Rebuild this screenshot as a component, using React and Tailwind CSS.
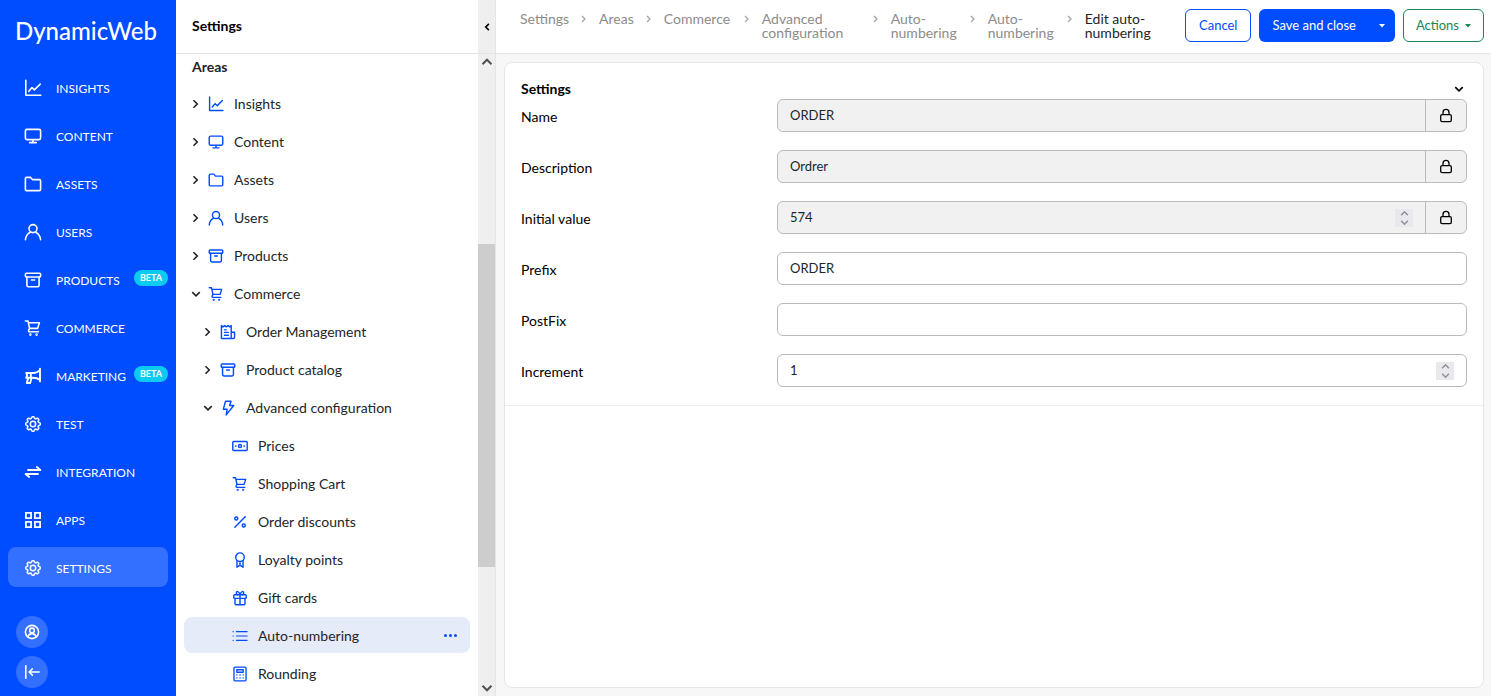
import React, { useState } from "react";
import { BsGear } from "react-icons/bs";

// All icons share the same 18x18 box and stroke
const Svg = ({ children, className = "size-4", width = 1.6 }) => (
  <svg
    viewBox="0 0 18 18"
    fill="none"
    stroke="currentColor"
    strokeWidth={width}
    strokeLinecap="round"
    strokeLinejoin="round"
    className={`shrink-0 ${className}`}
    aria-hidden="true"
  >
    {children}
  </svg>
);

const InsightsIcon = (props) => (
  <Svg {...props}>
    <path d="M1.8 1.2v15.1h15M4.8 12.3 8 8.6l2.4 2.3 5.8-5.8" />
  </Svg>
);

const ContentIcon = (props) => (
  <Svg {...props}>
    <rect x="1.4" y="2.4" width="15.2" height="10.2" rx="1.6" />
    <path d="M9 12.8v2.6M5.6 15.6h6.8" />
  </Svg>
);

const AssetsIcon = (props) => (
  <Svg {...props}>
    <path d="M1.4 3.6c0-.7.5-1.2 1.2-1.2h4l1.8 2.2h7c.7 0 1.2.5 1.2 1.2v8.6c0 .7-.5 1.2-1.2 1.2H2.6c-.7 0-1.2-.5-1.2-1.2z" />
  </Svg>
);

const UsersIcon = (props) => (
  <Svg {...props}>
    <circle cx="9" cy="5.6" r="4" />
    <path d="M1.4 16.8c.3-3.6 2.3-6.2 4.8-7.6M16.6 16.8c-.3-3.6-2.3-6.2-4.8-7.6" />
  </Svg>
);

const ProductsIcon = (props) => (
  <Svg {...props}>
    <rect x="1.4" y="2.2" width="15.2" height="3.8" rx="1" />
    <path d="M2.9 6v8.2c0 .9.6 1.5 1.5 1.5h9.2c.9 0 1.5-.6 1.5-1.5V6M7.4 9h3.2" />
  </Svg>
);

const CommerceIcon = (props) => (
  <Svg {...props}>
    <path d="M1.4 2h2.6l1.6 7.4h8l1.8-5.6H4.4M5.6 9.4l-.9 1.8c-.4.8 0 1.6.9 1.6h8.8" />
    <circle cx="6.4" cy="15.6" r=".5" />
    <circle cx="12.6" cy="15.6" r=".5" />
  </Svg>
);

const MarketingIcon = (props) => (
  <Svg {...props} width={1.9}>
    <path d="M16 1.6v12.8M16 3.2C14 5.2 11.600 6 9 6H2.200l1 2.400-1 2.400H9c2.600 0 5 .6 7 2.200M6.800 6.200v4.400M4.200 11l-1.400 5h3.400l1.200-4.800" />
  </Svg>
);

const GearIcon = ({ className }) => (
  <BsGear className={`shrink-0 p-px ${className}`} strokeWidth="0.6" />
);

const IntegrationIcon = (props) => (
  <Svg {...props} width={1.8}>
    <path d="M4 7h12.4l-3.6-3M14 11H1.6l3.6 3" />
  </Svg>
);

const AppsIcon = (props) => (
  <Svg {...props} width={1.8}>
    <path
      strokeLinejoin="miter"
      d="M1.9 1.9h5.2v5.2H1.900zM10.900 1.900h5.200v5.200h-5.200zM1.900 10.900h5.200v5.200H1.900zM10.900 10.900h5.200v5.200h-5.200z"
    />
  </Svg>
);

const OrderIcon = (props) => (
  <Svg {...props}>
    <path d="M1.6 16.4V1.8l1.8 1.4 1.9-1.4 1.9 1.4 1.9-1.4 1.9 1.4 1.6-1.4v14.6zM12.6 9.2h3.8v5.6c0 .9-.7 1.6-1.6 1.6h-2.2M5 6.6h2M5 9.4h4.4M5 12.6h4.4" />
  </Svg>
);

const BoltIcon = (props) => (
  <Svg {...props}>
    <path d="M6.2 1.4h6.2l-1.6 4.8h4.6L7 16.8l1-6.4H3.8z" />
  </Svg>
);

const PricesIcon = (props) => (
  <Svg {...props}>
    <rect x=".9" y="4" width="16.2" height="10" rx="1.2" />
    <circle cx="9" cy="9" r="1.7" />
    <path d="M4 9h.6M13.4 9h.6" />
  </Svg>
);

const DiscountIcon = (props) => (
  <Svg {...props}>
    <path d="M14.8 3 3.2 15" />
    <circle cx="4.8" cy="5" r="1.7" />
    <circle cx="13.2" cy="13" r="1.7" />
  </Svg>
);

const LoyaltyIcon = (props) => (
  <Svg {...props}>
    <circle cx="9" cy="5.8" r="4.8" />
    <path d="M5.6 9.6v7.6L9 14.8l3.4 2.4V9.6M9 12v2.6" />
  </Svg>
);

const GiftIcon = (props) => (
  <Svg {...props}>
    <rect x="2" y="5.4" width="14" height="4" rx="1" />
    <path d="M3.4 9.4v6c0 .7.5 1.2 1.2 1.2h8.8c.7 0 1.2-.5 1.2-1.2v-6M9 5.4v11.2M9 5.2C7.8 1.4 4.8.8 4.8 3.2c0 1.2.8 2 1.4 2.1M9 5.2c1.2-3.8 4.2-4.4 4.2-2 0 1.2-.8 2-1.4 2.1" />
  </Svg>
);

const NumberingIcon = (props) => (
  <Svg {...props} width={1.4}>
    <path d="M5 4.2h12M5 9h12M5 13.8h12M1.2 4.2h.2M1.2 9h.2M1.2 13.8h.2" />
  </Svg>
);

const RoundingIcon = (props) => (
  <Svg {...props} width={1.5}>
    <rect x="2.2" y="1.2" width="13.6" height="15.6" rx="1.2" />
    <path d="M5.4 4.2h7.2V7H5.4zM5.4 10h.2M9 10h.2M12.4 10h.2M5.4 13.4h.2M9 13.4h.2M12.4 13.4h.2" />
  </Svg>
);

const ProfileIcon = (props) => (
  <Svg {...props} width={1.8}>
    <circle cx="9" cy="9" r="7.4" />
    <circle cx="9" cy="7.2" r="2.6" />
    <path d="M4.6 14.6c.4-2.4 2-3.8 4.4-3.8s4 1.4 4.4 3.8" />
  </Svg>
);

const CollapseIcon = (props) => (
  <Svg {...props} width={1.8}>
    <path d="M2 2v14M17 9H6M9.4 5.4 5.8 9l3.6 3.6" />
  </Svg>
);

const LockIcon = () => (
  <svg viewBox="0 0 14 16" fill="none" stroke="currentColor" strokeWidth="1.3" className="h-4 w-3.5" aria-hidden="true">
    <rect x="1.7" y="6.6" width="10.6" height="7" rx="1.4" />
    <path d="M4 6.6V4.400a3 3 0 0 1 6 0v2.200" />
  </svg>
);

// Small arrow used in the tree, the breadcrumb and the panel headers
const Chevron = ({ dir = "right", className = "size-2.5" }) => {
  const paths = {
    right: "M2 1 5 4 2 7",
    left: "M5.5 1.5 3 4 5.500 6.500",
    down: "M1 2.5 4 5.5 7 2.5",
    up: "M1 5.5 4 2.5 7 5.5",
  };
  return (
    <svg
      viewBox="0 0 8 8"
      fill="none"
      stroke="currentColor"
      strokeWidth="1.3"
      className={`shrink-0 ${className}`}
      aria-hidden="true"
    >
      <path d={paths[dir]} />
    </svg>
  );
};

const Caret = () => (
  <svg viewBox="0 0 6 4" fill="currentColor" className="h-1 w-1.5 shrink-0" aria-hidden="true">
    <path d="M0 0h6L3 3.4z" />
  </svg>
);

const navItems = [
  { label: "INSIGHTS", icon: InsightsIcon },
  { label: "CONTENT", icon: ContentIcon },
  { label: "ASSETS", icon: AssetsIcon },
  { label: "USERS", icon: UsersIcon },
  { label: "PRODUCTS", icon: ProductsIcon, beta: true },
  { label: "COMMERCE", icon: CommerceIcon },
  { label: "MARKETING", icon: MarketingIcon, beta: true },
  { label: "TEST", icon: GearIcon },
  { label: "INTEGRATION", icon: IntegrationIcon },
  { label: "APPS", icon: AppsIcon },
  { label: "SETTINGS", icon: GearIcon, active: true },
];

const treeItems = [
  { label: "Insights", icon: InsightsIcon, level: 0, arrow: "right" },
  { label: "Content", icon: ContentIcon, level: 0, arrow: "right" },
  { label: "Assets", icon: AssetsIcon, level: 0, arrow: "right" },
  { label: "Users", icon: UsersIcon, level: 0, arrow: "right" },
  { label: "Products", icon: ProductsIcon, level: 0, arrow: "right" },
  { label: "Commerce", icon: CommerceIcon, level: 0, arrow: "down" },
  { label: "Order Management", icon: OrderIcon, level: 1, arrow: "right" },
  { label: "Product catalog", icon: ProductsIcon, level: 1, arrow: "right" },
  { label: "Advanced configuration", icon: BoltIcon, level: 1, arrow: "down" },
  { label: "Prices", icon: PricesIcon, level: 2 },
  { label: "Shopping Cart", icon: CommerceIcon, level: 2 },
  { label: "Order discounts", icon: DiscountIcon, level: 2 },
  { label: "Loyalty points", icon: LoyaltyIcon, level: 2 },
  { label: "Gift cards", icon: GiftIcon, level: 2 },
  { label: "Auto-numbering", icon: NumberingIcon, level: 2, active: true },
  { label: "Rounding", icon: RoundingIcon, level: 2 },
];

const crumbs = [
  { label: "Settings" },
  { label: "Areas" },
  { label: "Commerce", width: "w-[68px]" },
  { label: "Advanced configuration", width: "w-[99px]" },
  { label: "Auto-numbering", width: "w-[67px]" },
  { label: "Auto-numbering", width: "w-[67px]" },
  { label: "Edit auto-numbering", width: "w-[72px]", current: true },
];

const fields = [
  { id: "name", label: "Name", value: "ORDER", locked: true },
  { id: "description", label: "Description", value: "Ordrer", locked: true },
  { id: "initialValue", label: "Initial value", value: "574", locked: true, number: true },
  { id: "prefix", label: "Prefix", value: "ORDER" },
  { id: "postfix", label: "PostFix", value: "" },
  { id: "increment", label: "Increment", value: "1", number: true },
];

const levelPadding = ["pl-[7px]", "pl-[19px]", "pl-[31px]"];

// MAIN NAVIGATION
const Sidebar = () => (
  <aside className="flex w-44 shrink-0 flex-col bg-[#004cff] text-white">
    <a href="#home" className="px-[15px] pt-[13px] text-2xl leading-9 font-medium">
      DynamicWeb
    </a>
    <nav className="mt-[18px] flex flex-col gap-2 px-2">
      {navItems.map(({ label, icon: Icon, beta, active }) => (
        <a
          key={label}
          href={`#${label.toLowerCase()}`}
          className={`flex h-10 items-center rounded-lg pt-0.5 pl-4 text-xs ${active ? "bg-[#3370ff]" : ""}`}
        >
          <Icon className="size-[18px]" />
          <span className="ml-3.5 pt-px">{label}</span>
          {beta && (
            <span className="mr-0 mb-1 ml-auto rounded-full bg-[#0dcaf0] px-1.5 text-[9px] leading-4 font-bold">
              BETA
            </span>
          )}
        </a>
      ))}
    </nav>
    <div className="mt-auto flex flex-col gap-2 px-4 pb-2">
      <button aria-label="Profile" className="flex size-8 items-center justify-center rounded-full bg-[#3370ff]">
        <ProfileIcon />
      </button>
      <button aria-label="Collapse menu" className="flex size-8 items-center justify-center rounded-full bg-[#3370ff]">
        <CollapseIcon />
      </button>
    </div>
  </aside>
);

// SETTINGS TREE WITH SCROLLBAR
const TreePanel = () => (
  <section className="flex w-80 shrink-0 flex-col border-r border-[#e4e4e4] bg-white text-[#212529]">
    <header className="flex h-[54px] shrink-0 border-b border-[#e4e4e4]">
      <h2 className="flex-1 self-center px-4 pb-0.5 text-sm font-bold text-black">Settings</h2>
      <button
        aria-label="Collapse panel"
        className="flex w-[17px] items-center justify-center bg-[#efefef] text-black"
      >
        <Chevron dir="left" />
      </button>
    </header>
    <div className="flex min-h-0 flex-1">
      <div className="flex min-w-0 flex-1 flex-col gap-0.5 overflow-hidden px-2">
        <h3 className="h-[29px] shrink-0 px-2 pt-[3px] text-sm font-bold">Areas</h3>
        {treeItems.map(({ label, icon: Icon, level, arrow, active }) => (
          <div
            key={label}
            className={`flex h-9 shrink-0 items-center rounded-lg pt-px pr-3 ${levelPadding[level]} ${active ? "bg-[#e5ebf8]" : ""}`}
          >
            <span className="mr-[7px] size-2.5">{arrow && <Chevron dir={arrow} />}</span>
            <Icon className="size-4 text-[#004cff]" />
            <a href="#area" className="ml-2.5 pt-px text-sm">
              {label}
            </a>
            {active && (
              <button aria-label="More" className="mr-px ml-auto flex gap-0.5 text-[#004cff]">
                <i className="size-[3px] rounded-full bg-current" />
                <i className="size-[3px] rounded-full bg-current" />
                <i className="size-[3px] rounded-full bg-current" />
              </button>
            )}
          </div>
        ))}
      </div>
      <div className="flex w-[17px] shrink-0 flex-col items-center bg-[#efefef] text-[#505050]">
        <Chevron dir="up" className="my-0.5 size-3" />
        <div className="flex w-full flex-1 flex-col">
          <div className="flex-[174]" />
          <div className="flex-[323] bg-[#cdcdcd]" />
          <div className="flex-[113]" />
        </div>
        <Chevron dir="down" className="my-0.5 size-3" />
      </div>
    </div>
  </section>
);

const Field = ({ id, label, value, locked, number }) => {
  const [text, setText] = useState(value);

  const step = (amount) => setText(String(Number(text) + amount));

  return (
    <div className="flex">
      <label htmlFor={id} className="w-64 shrink-0 pt-2 text-sm leading-5 text-black">
        {label}
      </label>
      <div
        className={`flex h-[33px] min-w-0 flex-1 overflow-hidden rounded-md border border-[#bbbbbb] ${locked ? "bg-[#f1f1f1]" : "bg-white"}`}
      >
        <input
          id={id}
          type={number ? "number" : "text"}
          value={text}
          readOnly={locked}
          onChange={(e) => setText(e.target.value)}
          className="min-w-0 flex-1 px-3 text-[13px] text-[#212529] outline-none [appearance:textfield] [&::-webkit-inner-spin-button]:appearance-none"
        />
        {number && (
          <span className="mr-3 flex size-[18px] flex-col items-center justify-between self-center bg-[#e9e9ed] text-[#8f8f9d]">
            <button type="button" aria-label={`Increase ${label}`} disabled={locked} onClick={() => step(1)}>
              <Chevron dir="up" className="size-[9px]" />
            </button>
            <button type="button" aria-label={`Decrease ${label}`} disabled={locked} onClick={() => step(-1)}>
              <Chevron dir="down" className="size-[9px]" />
            </button>
          </span>
        )}
        {locked && (
          <button
            type="button"
            aria-label={`Unlock ${label}`}
            className="flex w-[41px] items-center justify-center border-l border-[#bbbbbb] text-black"
          >
            <LockIcon />
          </button>
        )}
      </div>
    </div>
  );
};

// BREADCRUMB AND ACTION BUTTONS
const TopBar = () => (
  <header className="flex h-[54px] shrink-0 justify-between border-b border-[#e4e4e4] bg-white pr-[7px] pl-6">
    <nav aria-label="Breadcrumb" className="pt-3">
      <ol className="flex text-sm leading-3.5 text-[#8c8c8c]">
        {crumbs.map(({ label, width = "", current }, index) => (
          <li key={index} className="flex">
            {index > 0 && <Chevron className="mx-[11px] mt-[3px] size-2 text-[#a5a5a5]" />}
            {current ? (
              <span className={`text-[#212529] ${width}`}>{label}</span>
            ) : (
              <a href="#crumb" className={width}>
                {label}
              </a>
            )}
          </li>
        ))}
      </ol>
    </nav>
    <div className="flex shrink-0 gap-2 self-start pt-[9px] text-[13px]">
      <button className="h-[33px] rounded-md border border-[#004cff] px-[13px] text-[#004cff]">Cancel</button>
      <div className="flex h-[33px] rounded-md bg-[#004cff] text-white">
        <button className="px-[13px]">Save and close</button>
        <button aria-label="More save options" className="px-2.5">
          <Caret />
        </button>
      </div>
      <button className="flex h-[33px] items-center gap-1.5 rounded-md border border-[#198754] px-3 text-[#198754]">
        Actions
        <Caret />
      </button>
    </div>
  </header>
);

export default function App() {
  return (
    <div className="flex h-screen overflow-hidden font-['Lato',sans-serif]">
      <Sidebar />
      <TreePanel />
      <main className="flex min-w-0 flex-1 flex-col bg-[#f7f7f7]">
        <TopBar />
        <div className="flex flex-1 flex-col p-2 pr-[7px]">
          <div className="flex-1 rounded-lg border border-[#e6e6e6] bg-white">
            <form className="border-b border-[#ececec] px-4 pt-4 pb-[18px]" onSubmit={(e) => e.preventDefault()}>
              <div className="flex h-5 items-center justify-between text-black">
                <h1 className="text-sm font-bold">Settings</h1>
                <button type="button" aria-label="Collapse section" className="mr-[3px]">
                  <Chevron dir="down" />
                </button>
              </div>
              <div className="flex flex-col gap-[18px]">
                {fields.map((field) => (
                  <Field key={field.id} {...field} />
                ))}
              </div>
            </form>
          </div>
        </div>
      </main>
    </div>
  );
}
